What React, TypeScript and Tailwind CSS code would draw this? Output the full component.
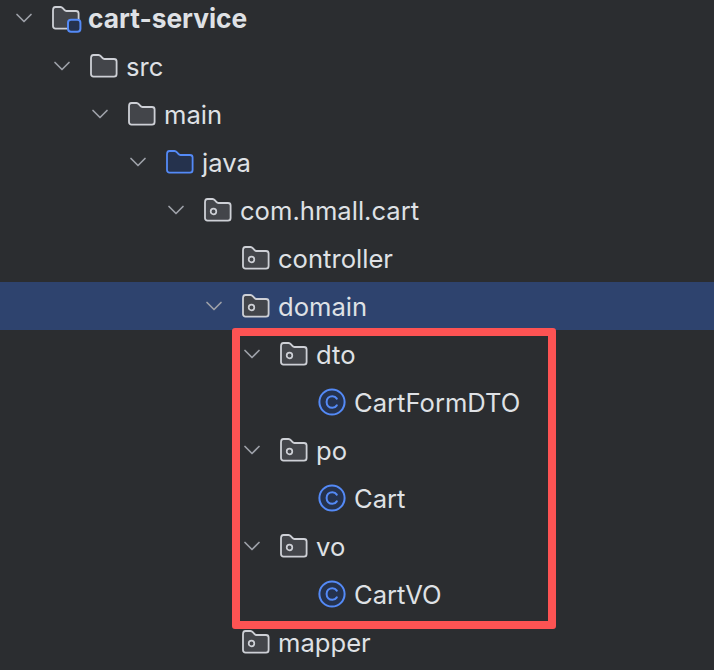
import React from 'react';

type Kind = 'module' | 'folder' | 'source' | 'package' | 'class';

// Project tree rows
const ROWS: { label: string; level: number; kind: Kind; open?: boolean; selected?: boolean; bold?: boolean }[] = [
  { label: 'cart-service', level: 0, kind: 'module', open: true, bold: true },
  { label: 'src', level: 1, kind: 'folder', open: true },
  { label: 'main', level: 2, kind: 'folder', open: true },
  { label: 'java', level: 3, kind: 'source', open: true },
  { label: 'com.hmall.cart', level: 4, kind: 'package', open: true },
  { label: 'controller', level: 5, kind: 'package' },
  { label: 'domain', level: 5, kind: 'package', open: true, selected: true },
  { label: 'dto', level: 6, kind: 'package', open: true },
  { label: 'CartFormDTO', level: 7, kind: 'class' },
  { label: 'po', level: 6, kind: 'package', open: true },
  { label: 'Cart', level: 7, kind: 'class' },
  { label: 'vo', level: 6, kind: 'package', open: true },
  { label: 'CartVO', level: 7, kind: 'class' },
  { label: 'mapper', level: 5, kind: 'package' },
];

const FOLDER_PATH = 'M2 6.5C2 4.6 2.9 3 4.5 3H9.5C10.6 3 11.2 3.5 12 4.4L13.6 6.2C14.1 6.8 14.6 7 15.4 7H25C26.6 7 27.6 8 27.6 9.5V22C27.6 23.6 26.6 24.6 25 24.6H4.5C3 24.6 2 23.6 2 22V6.5Z';

function Chevron() {
  return (
    <svg width="18" height="12" viewBox="0 0 18 12" fill="none" className="shrink-0">
      <path d="M2 2.5L9 9.5L16 2.5" stroke="#9da0a8" strokeWidth="1.7" strokeLinecap="round" strokeLinejoin="round" />
    </svg>
  );
}

function TreeIcon({ kind }: { kind: Kind }) {
  if (kind === 'class') {
    return (
      <svg width="28" height="28" viewBox="0 0 28 28" fill="none" className="shrink-0">
        <circle cx="14" cy="14" r="12.6" fill="#25324d" stroke="#548af7" strokeWidth="2" />
        <path d="M18.8 10.6C17.8 9 16.2 8.2 14.4 8.2C11 8.2 8.6 10.6 8.6 14C8.6 17.4 11 19.8 14.4 19.8C16.2 19.8 17.8 19 18.8 17.4" stroke="#548af7" strokeWidth="2" strokeLinecap="round" />
      </svg>
    );
  }
  const isSource = kind === 'source';
  return (
    <svg width="29" height="28" viewBox="0 0 29 28" fill="none" className="-ml-[1px] shrink-0 overflow-visible">
      <path d={FOLDER_PATH} fill={isSource ? '#25324d' : '#43454a'} stroke={isSource ? '#548af7' : '#ced0d6'} strokeWidth="1.8" />
      {kind === 'package' && <circle cx="10.5" cy="15.5" r="2.8" stroke="#ced0d6" strokeWidth="1.7" />}
      {kind === 'module' && (
        <rect x="17" y="15.8" width="12.4" height="12" rx="3" fill="#25324d" stroke="#548af7" strokeWidth="2" />
      )}
    </svg>
  );
}

export default function App() {
  return (
    <div className="relative h-[670px] w-[714px] overflow-hidden bg-[#2b2d30] font-['Inter',sans-serif] text-[25.6px] text-[#dfe1e5]">
      <div className="mt-[-6px] flex flex-col">
        {ROWS.map((row) => (
          <div
            key={row.label}
            className={`flex h-[48px] items-center ${row.selected ? 'bg-[#2e436e]' : ''}`}
          >
            <div style={{ width: row.level * 38 }} className="shrink-0" />
            <div className="ml-[15px] flex w-[37px] shrink-0 items-center">
              {row.open && <Chevron />}
            </div>
            <TreeIcon kind={row.kind} />
            <span className={`ml-[8px] whitespace-nowrap ${row.bold ? 'mt-[1px] text-[26.3px] font-bold' : 'mt-[3px]'}`}>{row.label}</span>
          </div>
        ))}
      </div>
      {/* annotation drawn over the tree */}
      <div className="absolute left-[232px] top-[328px] h-[301px] w-[324px] rounded-[3px] border-[8px] border-[#fd5353]" />
    </div>
  );
}
